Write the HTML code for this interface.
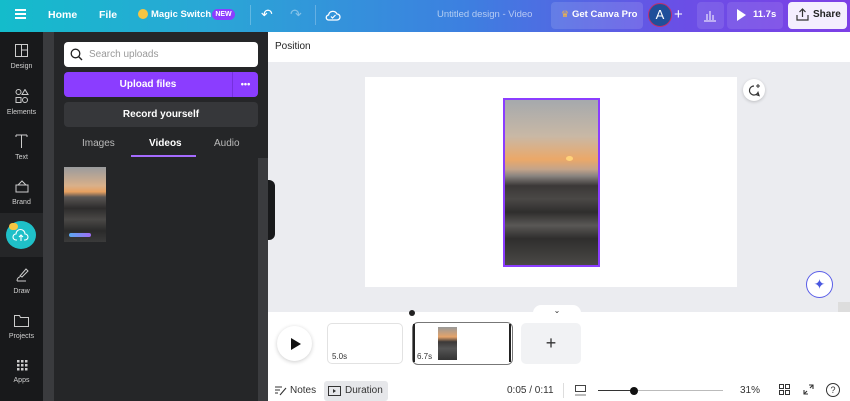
<!DOCTYPE html>
<html><head><meta charset="utf-8"><style>
*{box-sizing:border-box;margin:0;padding:0}
body{width:850px;height:401px;overflow:hidden;font-family:"Liberation Sans",sans-serif;position:relative;background:#fff}
.a{position:absolute}
.top{left:0;top:0;width:850px;height:32px;background:linear-gradient(90deg,#14bccb 0%,#2aa6d6 25%,#3d7fe0 55%,#6a4fe6 80%,#7d3fe6 100%)}
.tw{color:#fff;font-size:10.5px;font-weight:bold;top:8px;line-height:14px;white-space:nowrap}
.rail{left:0;top:32px;width:43px;height:369px;background:#18191b}
.ri{width:43px;text-align:center;color:#d0d0d0;font-size:7px;line-height:9px}
.ri svg{margin-bottom:2px}
.strip{left:43px;top:32px;width:11px;height:369px;background:#3a3b3e}
.panel{left:54px;top:32px;width:214px;height:369px;background:#252628}
.main{left:268px;top:32px;width:582px;height:369px;background:#ebecf0}
</style></head><body>
<div class="a top"></div>
<div class="a" style="left:15px;top:9px;width:11px;height:2px;background:#fff;box-shadow:0 4px 0 #fff,0 8px 0 #fff"></div>
<div class="a tw" style="left:48px">Home</div>
<div class="a tw" style="left:99px">File</div>
<div class="a" style="left:138px;top:9px;width:10px;height:10px;border-radius:50%;background:#f5c542"></div>
<div class="a tw" style="left:151px;font-size:9.5px">Magic Switch</div>
<div class="a" style="left:212px;top:9px;width:23px;height:11px;border-radius:6px;background:#8b3dff;color:#fff;font-size:7px;font-weight:bold;text-align:center;line-height:11px">NEW</div>
<div class="a" style="left:250px;top:5px;width:1px;height:20px;background:rgba(255,255,255,.25)"></div>
<div class="a" style="left:261px;top:6px;color:#fff;font-size:14px">↶</div>
<div class="a" style="left:290px;top:6px;color:rgba(255,255,255,.4);font-size:14px">↷</div>
<div class="a" style="left:315px;top:5px;width:1px;height:20px;background:rgba(255,255,255,.25)"></div>
<svg class="a" style="left:325px;top:8px" width="16" height="14" viewBox="0 0 16 14"><path d="M4 12h8a3 3 0 0 0 0-6 4.5 4.5 0 0 0-8.5 1A2.5 2.5 0 0 0 4 12z" fill="none" stroke="#fff" stroke-width="1.3"/><path d="M6 8.5l1.5 1.5 3-3" fill="none" stroke="#fff" stroke-width="1.2"/></svg>
<div class="a" style="left:437px;top:9px;color:rgba(255,255,255,.6);font-size:9.5px;line-height:12px">Untitled design - Video</div>
<div class="a" style="left:551px;top:2px;width:92px;height:27px;border-radius:4px;background:rgba(255,255,255,.12)"></div>
<div class="a" style="left:561px;top:9px;color:#f5b642;font-size:9px">♛</div>
<div class="a tw" style="left:572px;font-size:9.5px">Get Canva Pro</div>
<div class="a" style="left:648px;top:3px;width:24px;height:24px;border-radius:50%;background:#1f4f9a;border:1.5px solid #c0306a;color:#fff;font-size:13px;text-align:center;line-height:21px">A</div>
<div class="a" style="left:674px;top:6px;color:#fff;font-size:15px">+</div>
<div class="a" style="left:697px;top:2px;width:27px;height:27px;border-radius:4px;background:rgba(255,255,255,.1)"></div>
<svg class="a" style="left:703px;top:8px" width="14" height="14"><path d="M1 13h12M4 12V6M7 12V3M10 12V7" stroke="#fff" stroke-width="1"/></svg>
<div class="a" style="left:727px;top:2px;width:56px;height:27px;border-radius:4px;background:rgba(255,255,255,.1)"></div>
<div class="a" style="left:737px;top:9px;width:0;height:0;border-left:9px solid #fff;border-top:6px solid transparent;border-bottom:6px solid transparent"></div>
<div class="a tw" style="left:753px;font-size:9.5px">11.7s</div>
<div class="a" style="left:788px;top:2px;width:59px;height:27px;border-radius:4px;background:#f4eefe"></div>
<svg class="a" style="left:796px;top:8px" width="13" height="13"><path d="M1 7v5h11V7M6.5 9V1M3.5 4l3-3 3 3" fill="none" stroke="#333" stroke-width="1.2"/></svg>
<div class="a" style="left:813px;top:8px;color:#222;font-size:10px;font-weight:bold;line-height:14px">Share</div>

<div class="a rail"></div>
<div class="a" style="left:0;top:213px;width:43px;height:44px;background:#252628"></div>
<div class="a ri" style="left:0;top:44px"><svg width="13" height="13"><rect x=".5" y=".5" width="12" height="12" fill="none" stroke="#ccc"/><path d="M6.5 1v12M6.5 6h6" stroke="#ccc"/></svg><br>Design</div>
<div class="a ri" style="left:0;top:89px"><svg width="14" height="14"><circle cx="3.5" cy="3" r="2.5" fill="none" stroke="#ccc"/><path d="M10 .5l3 5H7z" fill="none" stroke="#ccc"/><rect x="1" y="8.5" width="5" height="5" fill="none" stroke="#ccc"/><circle cx="10" cy="11" r="2.5" fill="none" stroke="#ccc"/></svg><br>Elements</div>
<div class="a ri" style="left:0;top:134px"><svg width="13" height="14"><path d="M1 1h11M6.5 1v13M1 1v2M12 1v2" stroke="#ccc"/></svg><br>Text</div>
<div class="a ri" style="left:0;top:179px"><svg width="14" height="14"><rect x="1" y="6" width="12" height="7" fill="none" stroke="#ccc"/><path d="M3 6l4-4 4 4" fill="none" stroke="#ccc"/></svg><br>Brand</div>
<div class="a" style="left:6px;top:221px;width:30px;height:28px;border-radius:50%;background:#1fc0c8"></div>
<div class="a" style="left:9px;top:223px;width:9px;height:7px;border-radius:4px;background:#f5c542"></div>
<svg class="a" style="left:12px;top:228px" width="18" height="14"><path d="M5 12H4a3 3 0 0 1 0-6 4.5 4.5 0 0 1 9 0 3 3 0 0 1 0 6h-1M9 13V7M7 9l2-2 2 2" fill="none" stroke="#fff" stroke-width="1.1"/></svg>
<div class="a ri" style="left:0;top:268px"><svg width="14" height="14"><path d="M5 8l6-7 2 2-6 6zM2 13h9M2 13c0-3 2-4 3-4" fill="none" stroke="#ccc"/></svg><br>Draw</div>
<div class="a ri" style="left:0;top:314px"><svg width="15" height="13"><path d="M.5 1.5h5l1 2h8v9H.5z" fill="none" stroke="#ccc"/></svg><br>Projects</div>
<div class="a ri" style="left:0;top:359px"><svg width="12" height="12" fill="#ccc"><rect x="1" y="1" width="2.5" height="2.5"/><rect x="5" y="1" width="2.5" height="2.5"/><rect x="9" y="1" width="2.5" height="2.5"/><rect x="1" y="5" width="2.5" height="2.5"/><rect x="5" y="5" width="2.5" height="2.5"/><rect x="9" y="5" width="2.5" height="2.5"/><rect x="1" y="9" width="2.5" height="2.5"/><rect x="5" y="9" width="2.5" height="2.5"/><rect x="9" y="9" width="2.5" height="2.5"/></svg><br>Apps</div>
<div class="a strip"></div>
<div class="a panel"></div>
<div class="a" style="left:258px;top:158px;width:10px;height:243px;background:#3a3b3e"></div>
<div class="a" style="left:64px;top:42px;width:194px;height:25px;border-radius:4px;background:#fff"></div>
<svg class="a" style="left:70px;top:48px" width="13" height="13"><circle cx="5.5" cy="5.5" r="4.3" fill="none" stroke="#222" stroke-width="1.3"/><path d="M8.5 8.5l3.5 3.5" stroke="#222" stroke-width="1.4"/></svg>
<div class="a" style="left:89px;top:42px;font-size:10px;color:#999;line-height:25px">Search uploads</div>
<div class="a" style="left:64px;top:72px;width:194px;height:25px;border-radius:4px;background:#8b3dff"></div>
<div class="a" style="left:232px;top:72px;width:1px;height:25px;background:#7530dd"></div>
<div class="a" style="left:64px;top:72px;width:168px;text-align:center;color:#fff;font-size:10px;font-weight:bold;line-height:25px">Upload files</div>
<div class="a" style="left:233px;top:72px;width:25px;text-align:center;color:#fff;font-size:9px;font-weight:bold;line-height:25px">•••</div>
<div class="a" style="left:64px;top:102px;width:194px;height:25px;border-radius:4px;background:#36373a;color:#fff;font-size:10px;font-weight:bold;text-align:center;line-height:25px">Record yourself</div>
<div class="a" style="left:82px;top:138px;color:#bbb;font-size:10px;line-height:12px">Images</div>
<div class="a" style="left:149px;top:138px;color:#fff;font-size:10px;font-weight:bold;line-height:12px">Videos</div>
<div class="a" style="left:214px;top:138px;color:#bbb;font-size:10px;line-height:12px">Audio</div>
<div class="a" style="left:131px;top:155px;width:65px;height:2px;background:#a56bff"></div>
<div class="a" style="left:64px;top:167px;width:42px;height:75px;background:linear-gradient(180deg,#9a9b9e 0%,#d9b08a 25%,#e8a060 33%,#5a5654 40%,#2d2c2c 55%,#4a4846 70%,#2a2a2a 85%,#3a3a3a 100%)"></div>
<div class="a" style="left:69px;top:233px;width:22px;height:4px;border-radius:2px;background:linear-gradient(90deg,#5aa9f0,#a06cf5)"></div>

<div class="a main"></div>
<div class="a" style="left:268px;top:32px;width:582px;height:30px;background:#fff"></div>
<div class="a" style="left:275px;top:41px;font-size:10px;color:#222;line-height:12px">Position</div>
<div class="a" style="left:268px;top:180px;width:7px;height:60px;border-radius:0 6px 6px 0;background:#18191b"></div>
<div class="a" style="left:365px;top:77px;width:372px;height:210px;background:#fff"></div>
<div class="a" style="left:503px;top:98px;width:97px;height:169px;border:2px solid #8b3dff;background:linear-gradient(180deg,#a5a9ad 0%,#c9b8a5 22%,#eba868 36%,#c4a48a 42%,#8a8480 46%,#3b3837 52%,#4a4846 60%,#2f2e2d 68%,#5a5856 76%,#2f2e2d 84%,#4a4846 100%)"></div>
<div class="a" style="left:566px;top:156px;width:7px;height:5px;border-radius:50%;background:#ffd27a"></div>
<div class="a" style="left:743px;top:79px;width:22px;height:22px;border-radius:50%;background:#fff;box-shadow:0 1px 3px rgba(0,0,0,.2)"></div>
<svg class="a" style="left:748px;top:84px" width="13" height="13"><path d="M6 2a4.5 4.5 0 1 0 4 6.5l1 3-3-1" fill="none" stroke="#333" stroke-width="1.2"/><path d="M10 0v4M8 2h4" stroke="#333" stroke-width="1"/></svg>
<div class="a" style="left:806px;top:271px;width:27px;height:27px;border-radius:50%;background:#fff;border:1.5px solid #5a5ee8;text-align:center;color:#4a58e0;font-size:14px;line-height:24px">✦</div>
<div class="a" style="left:838px;top:302px;width:12px;height:10px;background:#ddd"></div>
<div class="a" style="left:268px;top:312px;width:582px;height:89px;background:#fff"></div>
<div class="a" style="left:533px;top:305px;width:48px;height:10px;border-radius:8px 8px 0 0;background:#fff;text-align:center;font-size:8px;color:#333;line-height:12px">⌄</div>
<div class="a" style="left:409px;top:310px;width:6px;height:6px;border-radius:50%;background:#222"></div>
<div class="a" style="left:277px;top:326px;width:35px;height:35px;border-radius:50%;background:#fff;box-shadow:0 1px 4px rgba(0,0,0,.2)"></div>
<div class="a" style="left:291px;top:338px;border-left:10px solid #111;border-top:6px solid transparent;border-bottom:6px solid transparent"></div>
<div class="a" style="left:327px;top:323px;width:76px;height:41px;border:1px solid #e2e2e2;border-radius:5px"></div>
<div class="a" style="left:332px;top:352px;font-size:8px;color:#333">5.0s</div>
<div class="a" style="left:412px;top:322px;width:101px;height:43px;border:1.5px solid #777;border-radius:6px"></div>
<div class="a" style="left:413px;top:324px;width:2px;height:38px;background:#222"></div>
<div class="a" style="left:509px;top:324px;width:2px;height:38px;background:#222"></div>
<div class="a" style="left:438px;top:327px;width:19px;height:33px;background:linear-gradient(180deg,#999 0%,#e5a36a 30%,#3b3938 45%,#555 65%,#333 100%)"></div>
<div class="a" style="left:417px;top:352px;font-size:8px;color:#333">6.7s</div>
<div class="a" style="left:521px;top:323px;width:60px;height:41px;border-radius:5px;background:#f1f2f4;text-align:center;font-size:18px;line-height:40px;color:#333">+</div>
<svg class="a" style="left:274px;top:385px" width="13" height="11"><path d="M1 2h7M1 5h5M1 8h3M6 10l6-7" stroke="#333" stroke-width="1.1"/></svg>
<div class="a" style="left:290px;top:385px;font-size:10px;color:#333;line-height:12px">Notes</div>
<div class="a" style="left:324px;top:381px;width:64px;height:20px;border-radius:3px;background:#e6e7ea"></div>
<svg class="a" style="left:328px;top:386px" width="13" height="10"><rect x=".5" y=".5" width="12" height="9" fill="none" stroke="#333"/><path d="M5 3v4l3-2z" fill="#333"/></svg>
<div class="a" style="left:345px;top:385px;font-size:10px;color:#333;line-height:12px">Duration</div>
<div class="a" style="left:507px;top:385px;font-size:10px;color:#333;line-height:12px">0:05 / 0:11</div>
<div class="a" style="left:563px;top:383px;width:1px;height:15px;background:#ddd"></div>
<div class="a" style="left:575px;top:385px;width:11px;height:7px;border:1px solid #444"></div>
<div class="a" style="left:575px;top:394px;width:11px;height:2px;background:#bbb"></div>
<div class="a" style="left:598px;top:390px;width:125px;height:1px;background:#bbb"></div>
<div class="a" style="left:598px;top:390px;width:36px;height:1px;background:#333"></div>
<div class="a" style="left:630px;top:387px;width:8px;height:8px;border-radius:50%;background:#111"></div>
<div class="a" style="left:740px;top:385px;font-size:10px;color:#333;line-height:12px">31%</div>
<svg class="a" style="left:779px;top:384px" width="11" height="11"><g fill="none" stroke="#333"><rect x=".5" y=".5" width="4" height="4"/><rect x="6.5" y=".5" width="4" height="4"/><rect x=".5" y="6.5" width="4" height="4"/><rect x="6.5" y="6.5" width="4" height="4"/></g></svg>
<svg class="a" style="left:803px;top:384px" width="11" height="11"><path d="M1 10l3-3M1 6v4h4M10 1L7 4M10 5V1H6" fill="none" stroke="#333" stroke-width="1.1"/></svg>
<div class="a" style="left:826px;top:383px;width:14px;height:14px;border-radius:50%;border:1.2px solid #333;text-align:center;font-size:9px;line-height:12px;color:#333">?</div>
</body></html>
